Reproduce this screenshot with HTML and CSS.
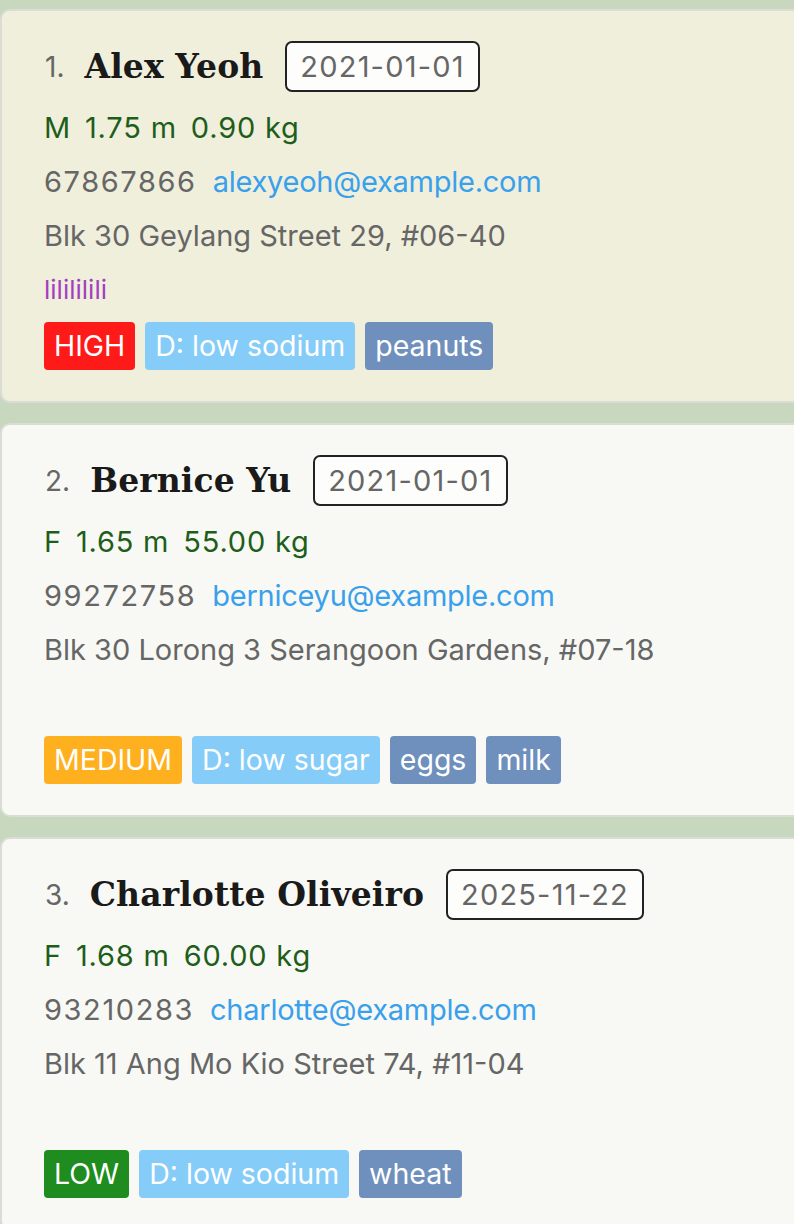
FILE: index.html
```html
<!DOCTYPE html>
<html>
<head>
<meta charset="utf-8">
<link rel="stylesheet" href="styles.css">
</head>
<body>
<div class="list">
  <div class="card selected">
    <div class="head">
      <span class="idx">1.</span>
      <span class="name">Alex Yeoh</span>
      <span class="date">2021-01-01</span>
    </div>
    <div class="row vitals"><span>M</span><span>1.75 m</span><span>0.90 kg</span></div>
    <div class="row contact"><span class="phone">67867866</span><span class="email">alexyeoh@example.com</span></div>
    <div class="row addr">Blk 30 Geylang Street 29, #06-40</div>
    <div class="row note">lilililili</div>
    <div class="tags">
      <span class="tag high">HIGH</span>
      <span class="tag diet">D: low sodium</span>
      <span class="tag allergy">peanuts</span>
    </div>
  </div>
  <div class="card">
    <div class="head">
      <span class="idx">2.</span>
      <span class="name">Bernice Yu</span>
      <span class="date">2021-01-01</span>
    </div>
    <div class="row vitals"><span>F</span><span>1.65 m</span><span>55.00 kg</span></div>
    <div class="row contact"><span class="phone">99272758</span><span class="email">berniceyu@example.com</span></div>
    <div class="row addr">Blk 30 Lorong 3 Serangoon Gardens, #07-18</div>
    <div class="row note"></div>
    <div class="tags">
      <span class="tag medium">MEDIUM</span>
      <span class="tag diet">D: low sugar</span>
      <span class="tag allergy">eggs</span>
      <span class="tag allergy">milk</span>
    </div>
  </div>
  <div class="card">
    <div class="head">
      <span class="idx">3.</span>
      <span class="name">Charlotte Oliveiro</span>
      <span class="date">2025-11-22</span>
    </div>
    <div class="row vitals"><span>F</span><span>1.68 m</span><span>60.00 kg</span></div>
    <div class="row contact"><span class="phone">93210283</span><span class="email">charlotte@example.com</span></div>
    <div class="row addr">Blk 11 Ang Mo Kio Street 74, #11-04</div>
    <div class="row note"></div>
    <div class="tags">
      <span class="tag low">LOW</span>
      <span class="tag diet">D: low sodium</span>
      <span class="tag allergy">wheat</span>
    </div>
  </div>
</div>
</body>
</html>
```

FILE: styles.css
```css
html, body {
  margin: 0;
  padding: 0;
  background: #c8d8bf;
  font-family: Inter, "Noto Sans", sans-serif;
  overflow: hidden;
}
.list {
  display: flex;
  flex-direction: column;
  gap: 20px;
  padding-top: 9px;
}
.card {
  background: #f8f9f4;
  border: 2px solid #dcdcd6;
  border-radius: 10px;
  margin-right: -20px;
  padding: 30px 0 31px 41px;
  height: 394px;
  box-sizing: border-box;
}
.card.selected {
  background: #f0efdc;
}
.head {
  display: flex;
  align-items: center;
  height: 51px;
  margin-bottom: 9px;
}
.idx {
  color: #666;
  font-size: 28px;
  margin-left: 2px;
  margin-right: 20px;
}
.name {
  font-family: "DejaVu Serif", serif;
  font-weight: bold;
  font-size: 33px;
  letter-spacing: 0.1px;
  color: #1a1a1a;
  margin-right: 22px;
}
.date {
  box-sizing: border-box;
  height: 51px;
  display: flex;
  align-items: center;
  padding: 0 13px;
  border: 2px solid #222;
  border-radius: 7px;
  background: #fdfdfb;
  color: #666;
  font-size: 29px;
  letter-spacing: 1.2px;
}
.row {
  height: 54px;
  line-height: 54px;
  font-size: 29px;
  margin-left: 1px;
  white-space: nowrap;
}
.vitals {
  color: #1e5e1a;
  display: flex;
  gap: 14px;
  letter-spacing: 0.8px;
}
.contact {
  display: flex;
  gap: 16px;
}
.phone {
  color: #666;
  letter-spacing: 1.6px;
}
.addr { color: #666; }
.email {
  color: #39a0ec;
  letter-spacing: -0.25px;
}
.note {
  color: #a43fbf;
  font-size: 26px;
}
.tags {
  display: flex;
  gap: 10px;
  margin-top: 5px;
  margin-left: 1px;
}
.tag {
  height: 48px;
  line-height: 48px;
  padding: 0 10px;
  border-radius: 4px;
  color: #fff;
  font-size: 28.5px;
}
.high { background: #ff1a1a; }
.medium { background: #ffb01e; }
.low { background: #1e8c1e; }
.diet { background: #85cdf8; }
.allergy { background: #6f8fbd; }
```
